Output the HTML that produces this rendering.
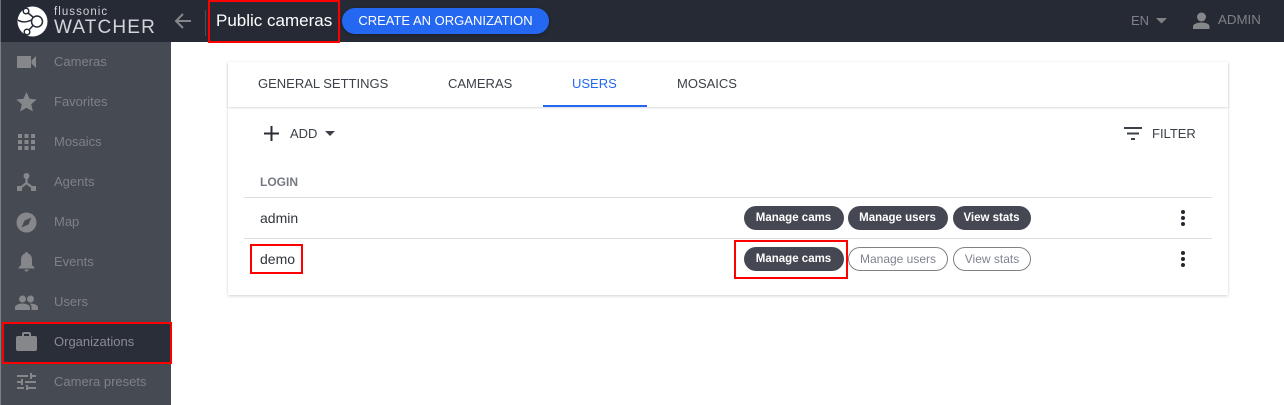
<!DOCTYPE html>
<html><head><meta charset="utf-8"><style>
html,body{margin:0;padding:0;width:1284px;height:405px;overflow:hidden;background:#fff;font-family:"Liberation Sans",sans-serif}
.a{position:absolute;white-space:nowrap}
.nav{position:absolute;left:54px;font-size:13px;color:#7f8185;line-height:16px;white-space:nowrap}
.t{font-size:13px;color:#3c4048;line-height:16px;position:absolute;white-space:nowrap}
.n{font-size:14px;color:#30343b;line-height:16px;position:absolute;white-space:nowrap}
.p{position:absolute;border-radius:12px;background:#454852;color:#fff;font-size:11.5px;font-weight:bold;text-align:center;box-sizing:border-box;top:0;height:24px;line-height:25px;padding-right:1px}
.o{background:#fff;border:1px solid #7f8185;color:#7f8390;font-weight:normal;font-size:12px;line-height:22px;padding-right:0}
.r{position:absolute;border:2px solid #f00;box-sizing:border-box}
.d{position:absolute;left:1181px;width:4px;height:4px;border-radius:50%;background:#24272d}
svg{position:absolute;overflow:visible}
</style></head><body>
<div class="a" style="left:0;top:42px;width:171px;height:363px;background:#454a53"></div>
<div class="a" style="left:0;top:42px;width:1px;height:363px;background:#7d7f83"></div>
<div class="a" style="left:0;top:0;width:1284px;height:42px;background:#252a35"></div>
<div class="a" style="left:0;top:0;width:1px;height:42px;background:#6d7076"></div>

<svg style="left:17px;top:6px" width="31" height="31" viewBox="0 0 31 31"><circle cx="15.500" cy="15.500" r="15" fill="#fff"/><g fill="none" stroke="#252a35" stroke-width="1.500"><circle cx="20" cy="15.500" r="5.500"/><circle cx="9" cy="5" r="2.800"/><circle cx="10" cy="26" r="2.800"/><path d="M11 7l5 4M12 24l4-4.500M1 14c4 3 9 2 13.500 0"/></g></svg>
<div class="a" style="left:54px;top:5px;font-size:11.500px;letter-spacing:1.050px;line-height:14px;color:#d0d1d4">flussonic</div>
<div class="a" style="left:54px;top:17px;font-size:19px;letter-spacing:1.150px;line-height:22px;color:#d4d5d8">WATCHER</div>
<svg style="left:174px;top:12px" width="18" height="18" viewBox="0 0 18 18"><path d="M17 9H2M9 2L2 9l7 7" fill="none" stroke="#85878b" stroke-width="2"/></svg>
<div class="a" style="left:205px;top:10px;width:1px;height:26px;background:#4a4e57"></div>
<div class="a" style="left:216px;top:11px;font-size:17px;line-height:20px;color:#fff">Public cameras</div>
<div class="r" style="left:208px;top:0;width:132px;height:43px"></div>
<div class="a" style="left:342px;top:8px;width:207px;height:26px;line-height:25px;border-radius:13px;background:#2468f2;color:#fff;font-size:13px;text-align:center;box-shadow:0 1px 3px rgba(0,0,0,.3)">CREATE AN ORGANIZATION</div>
<div class="a" style="left:1131px;top:13px;font-size:13px;line-height:16px;color:#7f8185">EN</div>
<svg style="left:1156px;top:18px" width="11" height="6"><path d="M0 0h11L5.500 5.500z" fill="#7f8185"/></svg>
<svg style="left:1192px;top:12px" width="19" height="18" viewBox="0 0 19 18"><circle cx="9.500" cy="5" r="4.500" fill="#85878b"/><path d="M1 17v-2.500C1 12 5 10.500 9.500 10.500s8 1.500 8 4V17z" fill="#85878b"/></svg>
<div class="a" style="left:1218px;top:12px;font-size:13.300px;line-height:16px;color:#7f8185">ADMIN</div>

<svg style="left:17px;top:56px" width="19" height="13"><path d="M0 0h14v12H0zM14.500 4.500L19 0v12l-4.500-4.500z" fill="#85878b"/></svg>
<div class="nav" style="top:54px">Cameras</div>
<svg style="left:16px;top:91px" width="21" height="21" viewBox="0 0 21 21"><path d="M10.500 1l3 6.800 7.200.7-5.500 4.800 1.700 7.200-6.400-3.800-6.400 3.800 1.700-7.200L.3 8.500l7.200-.7z" fill="#85878b"/></svg>
<div class="nav" style="top:94px">Favorites</div>
<svg style="left:18px;top:134px" width="17" height="16" fill="#85878b"><path d="M0 0h4v4H0zM6.500 0h4v4h-4zM13 0h4v4h-4zM0 6h4v4H0zM6.500 6h4v4h-4zM13 6h4v4h-4zM0 12h4v4H0zM6.500 12h4v4h-4zM13 12h4v4h-4z"/></svg>
<div class="nav" style="top:134px">Mosaics</div>
<svg style="left:17px;top:173px" width="19" height="18" viewBox="0 0 19 18"><circle cx="9.500" cy="3" r="3" fill="#85878b"/><path d="M9.500 5v6M9.500 10L3 15M9.500 10l6.500 5" stroke="#85878b" stroke-width="2.200" fill="none"/><path d="M0 13h5v5H0zM14 13h5v5h-5z" fill="#85878b"/></svg>
<div class="nav" style="top:174px">Agents</div>
<svg style="left:16px;top:212px" width="21" height="21" viewBox="0 0 21 21"><circle cx="10.500" cy="10.500" r="10" fill="#85878b"/><path d="M15.500 5.500l-3 7-7 3 3-7z" fill="#454a53"/></svg>
<div class="nav" style="top:214px">Map</div>
<svg style="left:18px;top:252px" width="17" height="19" viewBox="0 0 17 19"><path d="M8.500 0c1 0 1.500.7 1.500 1.500C13 2.500 14 5 14 8v5l2.500 2.500v1H.5v-1L3 13V8c0-3 1-5.500 4-6.500C7 .7 7.500 0 8.500 0zM6.500 17.500h4a2 2 0 0 1-4 0z" fill="#85878b"/></svg>
<div class="nav" style="top:254px">Events</div>
<svg style="left:15px;top:295px" width="23" height="15" viewBox="0 0 23 15"><circle cx="7.500" cy="4" r="3.500" fill="#85878b"/><circle cx="15.500" cy="4" r="3.500" fill="#85878b"/><path d="M0 15v-2.500C0 10 4 8.500 7.500 8.500S15 10 15 12.500V15zM16.500 15v-3c0-1.300-.7-2.400-1.700-3.300 3.600-.5 8.200 1 8.200 3.800V15z" fill="#85878b"/></svg>
<div class="nav" style="top:294px">Users</div>

<div class="a" style="left:2px;top:322px;width:169px;height:41px;background:#2a2e39"></div>
<svg style="left:16px;top:331px" width="21" height="21" viewBox="0 0 21 21"><path d="M6 5V3a2 2 0 0 1 2-2h5a2 2 0 0 1 2 2v2h4a2 2 0 0 1 2 2v11a2 2 0 0 1-2 2H2a2 2 0 0 1-2-2V7a2 2 0 0 1 2-2zM8 3v2h5V3z" fill="#85878b" fill-rule="evenodd"/></svg>
<div class="nav" style="top:334px;color:#8a8c90">Organizations</div>
<div class="r" style="left:2px;top:322px;width:170px;height:42px"></div>
<svg style="left:17px;top:373px" width="19" height="17" fill="#85878b"><path d="M0 2h11v2H0zM13 0h2v2h4v2h-4v2h-2zM0 8h4V6h2v6H4v-2H0zM8 8h11v2H8zM0 14h7v2H0zM9 12h2v2h8v2h-8v1H9z"/></svg>
<div class="nav" style="top:374px">Camera presets</div>

<div class="a" style="left:228px;top:62px;width:1000px;height:233px;background:#fff;box-shadow:0 1px 3px rgba(0,0,0,.18)"></div>
<div class="a" style="left:228px;top:62px;width:1000px;height:45px;background:#fff;box-shadow:0 1px 2px rgba(0,0,0,.14)"></div>
<div class="t" style="left:258px;top:76px">GENERAL SETTINGS</div>
<div class="t" style="left:448px;top:76px">CAMERAS</div>
<div class="t" style="left:572px;top:76px;color:#2468f2">USERS</div>
<div class="t" style="left:677px;top:76px">MOSAICS</div>
<div class="a" style="left:543px;top:105px;width:104px;height:2px;background:#2468f2"></div>

<svg style="left:264px;top:126px" width="15" height="15"><path d="M7.500 0v15M0 7.500h15" stroke="#2a2d33" stroke-width="2"/></svg>
<div class="t" style="left:290px;top:126px">ADD</div>
<svg style="left:325px;top:131px" width="10" height="5"><path d="M0 0h10L5 5z" fill="#3c4048"/></svg>
<svg style="left:1124px;top:127px" width="18" height="13" fill="#3c4048"><path d="M0 0h18v2H0zM3 5.500h12v2H3zM7 11h4v2H7z"/></svg>
<div class="t" style="left:1152px;top:126px">FILTER</div>

<div class="a" style="left:260px;top:175px;font-size:12px;font-weight:bold;line-height:14px;color:#757982">LOGIN</div>
<div class="a" style="left:244px;top:197px;width:968px;height:1px;background:#dedede"></div>
<div class="a" style="left:244px;top:238px;width:968px;height:1px;background:#dedede"></div>
<div class="n" style="left:260px;top:210px">admin</div>
<div class="n" style="left:260px;top:251px">demo</div>
<div class="r" style="left:250px;top:244px;width:53px;height:30px"></div>

<div class="a" style="left:0;top:206px;width:1284px;height:24px">
<div class="p" style="left:744px;width:100px">Manage cams</div>
<div class="p" style="left:848px;width:100px">Manage users</div>
<div class="p" style="left:953px;width:78px">View stats</div>
</div>
<div class="a" style="left:0;top:247px;width:1284px;height:24px">
<div class="p" style="left:744px;width:100px">Manage cams</div>
<div class="p o" style="left:848px;width:100px">Manage users</div>
<div class="p o" style="left:953px;width:78px">View stats</div>
</div>
<div class="r" style="left:734px;top:240px;width:114px;height:39px"></div>

<div class="d" style="top:210px"></div><div class="d" style="top:216px"></div><div class="d" style="top:222px"></div>
<div class="d" style="top:251px"></div><div class="d" style="top:257px"></div><div class="d" style="top:263px"></div>
</body></html>
